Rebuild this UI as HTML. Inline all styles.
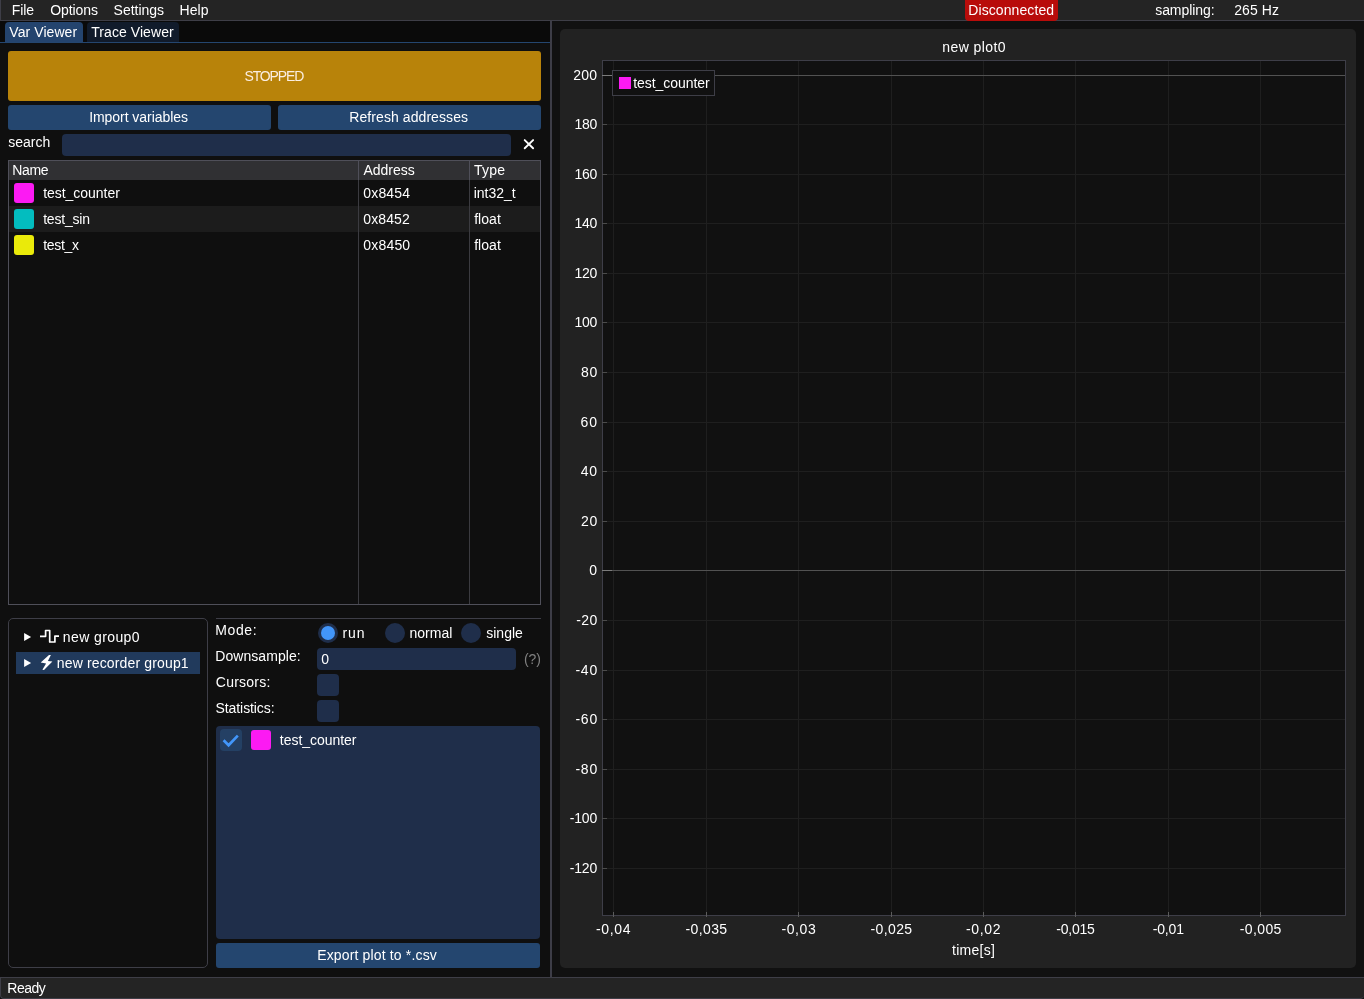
<!DOCTYPE html>
<html><head><meta charset="utf-8"><title>viewer</title>
<style>
html,body{margin:0;padding:0;}
body{width:1364px;height:999px;overflow:hidden;background:#111111;position:relative;font-family:"Liberation Sans",sans-serif;font-size:14px;color:#fff;}
.a{position:absolute;box-sizing:border-box;}
.t{position:absolute;white-space:pre;line-height:16px;height:16px;font-family:"Liberation Sans",sans-serif;font-size:14px;color:#fff;}
svg{position:absolute;left:0;top:0;overflow:visible;}
#tx{position:absolute;left:0;top:0;width:1364px;height:999px;will-change:transform;}
</style></head>
<body>
<div class="a" style="left:0px;top:0px;width:1364px;height:20px;background:#242424;"></div>
<div class="a" style="left:0px;top:20px;width:1364px;height:1px;background:#3e3e47;"></div>
<div class="a" style="left:0px;top:0px;width:1px;height:21px;background:#3e3e47;"></div>
<div class="a" style="left:0px;top:21px;width:550px;height:21px;background:#0a0a0a;"></div>
<div class="a" style="left:0px;top:42px;width:550px;height:1px;background:#24466f;"></div>
<div class="a" style="left:0px;top:43px;width:550px;height:934px;background:#0f0f0f;"></div>
<div class="a" style="left:550px;top:21px;width:2px;height:956px;background:#3d3d47;"></div>
<div class="a" style="left:0px;top:977px;width:552px;height:22px;background:#0f0f0f;"></div>
<div class="a" style="left:0px;top:977px;width:1364px;height:22px;background:#242424;border:1px solid #3e3e47;border-right:none;border-radius:0 0 4px 4px;"></div>
<div class="a" style="left:965px;top:0px;width:93px;height:21px;background:#b80c0a;border-radius:0 0 4px 4px;"></div>
<div class="a" style="left:5px;top:22px;width:78px;height:20px;background:#24446e;border-radius:4px 4px 0 0;"></div>
<div class="a" style="left:87px;top:22px;width:92px;height:20px;background:#111b2b;border-radius:4px 4px 0 0;"></div>
<div class="a" style="left:8px;top:51px;width:533px;height:50px;background:#b8830a;border-radius:3px;"></div>
<div class="a" style="left:8px;top:105px;width:263px;height:25px;background:#24466f;border-radius:3px;"></div>
<div class="a" style="left:278px;top:105px;width:263px;height:25px;background:#24466f;border-radius:3px;"></div>
<div class="a" style="left:62px;top:134px;width:449px;height:22px;background:#1f2e4a;border-radius:4px;"></div>
<div class="a" style="left:8px;top:160px;width:533px;height:445px;border:1px solid #4f4f59;"></div>
<div class="a" style="left:9px;top:161px;width:531px;height:19px;background:#303033;"></div>
<div class="a" style="left:9px;top:206px;width:531px;height:26px;background:#1c1c1c;"></div>
<div class="a" style="left:358px;top:161px;width:1px;height:443px;background:#3b3b40;"></div>
<div class="a" style="left:469px;top:161px;width:1px;height:443px;background:#3b3b40;"></div>
<div class="a" style="left:358px;top:161px;width:1px;height:19px;background:#4f4f59;"></div>
<div class="a" style="left:469px;top:161px;width:1px;height:19px;background:#4f4f59;"></div>
<div class="a" style="left:14px;top:183px;width:20px;height:20px;background:#fc1af3;border-radius:3px;"></div>
<div class="a" style="left:14px;top:209px;width:20px;height:20px;background:#03bdbf;border-radius:3px;"></div>
<div class="a" style="left:14px;top:235px;width:20px;height:20px;background:#eaea0a;border-radius:3px;"></div>
<div class="a" style="left:8px;top:618px;width:200px;height:350px;border:1px solid #3e3e47;border-radius:5px;"></div>
<div class="a" style="left:16px;top:652px;width:184px;height:22px;background:#213a5c;"></div>
<div class="a" style="left:216px;top:618px;width:325px;height:1px;background:#3e3e47;"></div>
<div class="a" style="left:318px;top:623px;width:20px;height:20px;background:#1f2e4a;border-radius:50%;"></div>
<div class="a" style="left:321px;top:626px;width:14px;height:14px;background:#4296fa;border-radius:50%;"></div>
<div class="a" style="left:385px;top:623px;width:20px;height:20px;background:#1f2e4a;border-radius:50%;"></div>
<div class="a" style="left:461px;top:623px;width:20px;height:20px;background:#1f2e4a;border-radius:50%;"></div>
<div class="a" style="left:317px;top:648px;width:199px;height:22px;background:#1f2e4a;border-radius:4px;"></div>
<div class="a" style="left:317px;top:674px;width:22px;height:22px;background:#1f2e4a;border-radius:4px;"></div>
<div class="a" style="left:317px;top:700px;width:22px;height:22px;background:#1f2e4a;border-radius:4px;"></div>
<div class="a" style="left:216px;top:726px;width:324px;height:213px;background:#1f2e4a;border-radius:4px;"></div>
<div class="a" style="left:220px;top:729px;width:22px;height:22px;background:#244064;border-radius:4px;"></div>
<div class="a" style="left:251px;top:730px;width:20px;height:20px;background:#fc1af3;border-radius:3px;"></div>
<div class="a" style="left:216px;top:943px;width:324px;height:25px;background:#24466f;border-radius:3px;"></div>
<div class="a" style="left:560px;top:29px;width:796px;height:939px;background:#222222;border-radius:5px;"></div>
<div class="a" style="left:602px;top:60px;width:744px;height:856px;background:#111111;"></div>
<svg width="1364" height="999" viewBox="0 0 1364 999"><rect x="613" y="61" width="1" height="854" fill="#1f1f1f"/><rect x="706" y="61" width="1" height="854" fill="#1f1f1f"/><rect x="798" y="61" width="1" height="854" fill="#1f1f1f"/><rect x="891" y="61" width="1" height="854" fill="#1f1f1f"/><rect x="983" y="61" width="1" height="854" fill="#1f1f1f"/><rect x="1075" y="61" width="1" height="854" fill="#1f1f1f"/><rect x="1168" y="61" width="1" height="854" fill="#1f1f1f"/><rect x="1260" y="61" width="1" height="854" fill="#1f1f1f"/><rect x="603" y="75" width="742" height="1" fill="#525252"/><rect x="603" y="124" width="742" height="1" fill="#1f1f1f"/><rect x="603" y="174" width="742" height="1" fill="#1f1f1f"/><rect x="603" y="223" width="742" height="1" fill="#1f1f1f"/><rect x="603" y="273" width="742" height="1" fill="#1f1f1f"/><rect x="603" y="322" width="742" height="1" fill="#1f1f1f"/><rect x="603" y="372" width="742" height="1" fill="#1f1f1f"/><rect x="603" y="422" width="742" height="1" fill="#1f1f1f"/><rect x="603" y="471" width="742" height="1" fill="#1f1f1f"/><rect x="603" y="521" width="742" height="1" fill="#1f1f1f"/><rect x="603" y="570" width="742" height="1" fill="#525252"/><rect x="603" y="620" width="742" height="1" fill="#1f1f1f"/><rect x="603" y="670" width="742" height="1" fill="#1f1f1f"/><rect x="603" y="719" width="742" height="1" fill="#1f1f1f"/><rect x="603" y="769" width="742" height="1" fill="#1f1f1f"/><rect x="603" y="818" width="742" height="1" fill="#1f1f1f"/><rect x="603" y="868" width="742" height="1" fill="#1f1f1f"/></svg>
<div class="a" style="left:602px;top:60px;width:744px;height:856px;border:1px solid #3e3e48;"></div>
<svg width="1364" height="999" viewBox="0 0 1364 999"><rect x="613" y="912" width="1" height="5" fill="#5c5c5c"/><rect x="706" y="912" width="1" height="5" fill="#5c5c5c"/><rect x="798" y="912" width="1" height="5" fill="#5c5c5c"/><rect x="891" y="912" width="1" height="5" fill="#5c5c5c"/><rect x="983" y="912" width="1" height="5" fill="#5c5c5c"/><rect x="1075" y="912" width="1" height="5" fill="#5c5c5c"/><rect x="1168" y="912" width="1" height="5" fill="#5c5c5c"/><rect x="1260" y="912" width="1" height="5" fill="#5c5c5c"/><rect x="602" y="75" width="10" height="1" fill="#7c7c7c"/><rect x="602" y="124" width="5" height="1" fill="#4c4c4c"/><rect x="602" y="174" width="5" height="1" fill="#4c4c4c"/><rect x="602" y="223" width="5" height="1" fill="#4c4c4c"/><rect x="602" y="273" width="5" height="1" fill="#4c4c4c"/><rect x="602" y="322" width="5" height="1" fill="#4c4c4c"/><rect x="602" y="372" width="5" height="1" fill="#4c4c4c"/><rect x="602" y="422" width="5" height="1" fill="#4c4c4c"/><rect x="602" y="471" width="5" height="1" fill="#4c4c4c"/><rect x="602" y="521" width="5" height="1" fill="#4c4c4c"/><rect x="602" y="570" width="10" height="1" fill="#7c7c7c"/><rect x="602" y="620" width="5" height="1" fill="#4c4c4c"/><rect x="602" y="670" width="5" height="1" fill="#4c4c4c"/><rect x="602" y="719" width="5" height="1" fill="#4c4c4c"/><rect x="602" y="769" width="5" height="1" fill="#4c4c4c"/><rect x="602" y="818" width="5" height="1" fill="#4c4c4c"/><rect x="602" y="868" width="5" height="1" fill="#4c4c4c"/></svg>
<div class="a" style="left:612px;top:70px;width:103px;height:26px;background:#111111;border:1px solid #3e3e47;"></div>
<div class="a" style="left:619px;top:77px;width:12px;height:12px;background:#fc1af3;"></div>
<svg width="1364" height="999" viewBox="0 0 1364 999"><path d="M24.1 632.9 L31.1 637 L24.1 641.1 Z" fill="#fff"/><path d="M24.1 658.9 L31.1 663 L24.1 667.1 Z" fill="#fff"/><path d="M40.0 636.3 H45.6 V630.5 H49.7 V642 H54.9 V636.1 H59.0" fill="none" stroke="#fff" stroke-width="1.7" stroke-linecap="butt" stroke-linejoin="round"/><path d="M49.0 654.9 L50.9 654.9 L47.9 660.9 L52.4 661.6 L44.0 670.0 L42.4 669.7 L46.1 663.6 L40.7 662.6 Z" fill="#fff"/><path d="M524.7 140.1 L533.1 148.3 M533.1 140.1 L524.7 148.3" stroke="#fff" stroke-width="1.9" stroke-linecap="round" fill="none"/><path d="M223.6 740.2 L228.6 745.2 L237.8 735.6" stroke="#4296fa" stroke-width="2.7" fill="none"/></svg>
<div id="tx">
<div class="t" style="left:11.68px;top:2.00px;letter-spacing:-0.030px;">File</div>
<div class="t" style="left:50.20px;top:2.00px;letter-spacing:-0.089px;">Options</div>
<div class="t" style="left:113.59px;top:2.00px;letter-spacing:-0.024px;">Settings</div>
<div class="t" style="left:179.40px;top:2.00px;letter-spacing:0.135px;">Help</div>
<div class="t" style="left:968.31px;top:2.00px;letter-spacing:0.087px;">Disconnected</div>
<div class="t" style="left:1155.20px;top:2.00px;letter-spacing:-0.053px;">sampling:</div>
<div class="t" style="left:1234.14px;top:2.00px;letter-spacing:0.114px;">265 Hz</div>
<div class="t" style="left:9.37px;top:24.00px;letter-spacing:0.065px;">Var Viewer</div>
<div class="t" style="left:91.25px;top:24.00px;letter-spacing:0.063px;">Trace Viewer</div>
<div class="t" style="left:244.44px;top:68.00px;letter-spacing:-1.118px;color:#fbeee2;">STOPPED</div>
<div class="t" style="left:89.13px;top:109.00px;letter-spacing:-0.047px;">Import variables</div>
<div class="t" style="left:349.28px;top:109.00px;letter-spacing:0.077px;">Refresh addresses</div>
<div class="t" style="left:8.20px;top:134.00px;">search</div>
<div class="t" style="left:12.31px;top:162.00px;letter-spacing:-0.343px;">Name</div>
<div class="t" style="left:363.40px;top:162.00px;">Address</div>
<div class="t" style="left:473.96px;top:162.00px;letter-spacing:0.240px;">Type</div>
<div class="t" style="left:43.18px;top:185.00px;letter-spacing:-0.036px;">test_counter</div>
<div class="t" style="left:43.18px;top:211.00px;letter-spacing:-0.193px;">test_sin</div>
<div class="t" style="left:43.18px;top:237.00px;letter-spacing:-0.306px;">test_x</div>
<div class="t" style="left:363.27px;top:185.00px;letter-spacing:0.169px;">0x8454</div>
<div class="t" style="left:363.27px;top:211.00px;letter-spacing:0.119px;">0x8452</div>
<div class="t" style="left:363.27px;top:237.00px;letter-spacing:0.188px;">0x8450</div>
<div class="t" style="left:473.70px;top:185.00px;">int32_t</div>
<div class="t" style="left:474.21px;top:211.00px;letter-spacing:0.025px;">float</div>
<div class="t" style="left:474.21px;top:237.00px;letter-spacing:0.025px;">float</div>
<div class="t" style="left:62.81px;top:629.00px;letter-spacing:0.399px;">new group0</div>
<div class="t" style="left:56.81px;top:655.00px;letter-spacing:0.148px;">new recorder group1</div>
<div class="t" style="left:215.31px;top:622.00px;letter-spacing:0.585px;">Mode:</div>
<div class="t" style="left:215.31px;top:648.00px;letter-spacing:0.057px;">Downsample:</div>
<div class="t" style="left:215.84px;top:674.00px;letter-spacing:0.240px;">Cursors:</div>
<div class="t" style="left:215.59px;top:700.00px;letter-spacing:-0.093px;">Statistics:</div>
<div class="t" style="left:342.56px;top:624.50px;letter-spacing:0.822px;">run</div>
<div class="t" style="left:409.57px;top:624.50px;letter-spacing:-0.019px;">normal</div>
<div class="t" style="left:486.15px;top:624.50px;letter-spacing:0.034px;">single</div>
<div class="t" style="left:321.27px;top:651.00px;">0</div>
<div class="t" style="left:524.11px;top:651.00px;letter-spacing:-0.207px;color:#808080;">(?)</div>
<div class="t" style="left:279.87px;top:732.00px;letter-spacing:-0.042px;">test_counter</div>
<div class="t" style="left:317.15px;top:947.00px;letter-spacing:0.156px;">Export plot to *.csv</div>
<div class="t" style="left:7.27px;top:980.00px;letter-spacing:-0.483px;">Ready</div>
<div class="t" style="left:942.28px;top:39.00px;letter-spacing:0.419px;">new plot0</div>
<div class="t" style="left:952.05px;top:942.00px;letter-spacing:0.265px;">time[s]</div>
<div class="t" style="left:633.23px;top:75.00px;letter-spacing:-0.059px;">test_counter</div>
<div class="t" style="left:573.20px;top:66.70px;letter-spacing:0.305px;">200</div>
<div class="t" style="left:574.61px;top:115.70px;letter-spacing:-0.397px;">180</div>
<div class="t" style="left:574.61px;top:165.70px;letter-spacing:-0.397px;">160</div>
<div class="t" style="left:574.61px;top:214.70px;letter-spacing:-0.397px;">140</div>
<div class="t" style="left:574.61px;top:264.70px;letter-spacing:-0.397px;">120</div>
<div class="t" style="left:574.61px;top:313.70px;letter-spacing:-0.397px;">100</div>
<div class="t" style="left:580.88px;top:363.70px;letter-spacing:0.717px;">80</div>
<div class="t" style="left:580.56px;top:413.70px;letter-spacing:1.035px;">60</div>
<div class="t" style="left:580.67px;top:462.70px;letter-spacing:0.931px;">40</div>
<div class="t" style="left:580.99px;top:512.70px;letter-spacing:0.612px;">20</div>
<div class="t" style="left:589.27px;top:561.70px;">0</div>
<div class="t" style="left:576.19px;top:611.70px;letter-spacing:0.373px;">-20</div>
<div class="t" style="left:575.44px;top:661.70px;letter-spacing:0.748px;">-40</div>
<div class="t" style="left:575.44px;top:710.70px;letter-spacing:0.748px;">-60</div>
<div class="t" style="left:575.44px;top:760.70px;letter-spacing:0.748px;">-80</div>
<div class="t" style="left:569.76px;top:809.70px;letter-spacing:-0.203px;">-100</div>
<div class="t" style="left:569.76px;top:859.70px;letter-spacing:-0.203px;">-120</div>
<div class="t" style="left:596.03px;top:921.00px;letter-spacing:0.660px;">-0,04</div>
<div class="t" style="left:685.55px;top:921.00px;letter-spacing:0.374px;">-0,035</div>
<div class="t" style="left:781.44px;top:921.00px;letter-spacing:0.582px;">-0,03</div>
<div class="t" style="left:870.55px;top:921.00px;letter-spacing:0.374px;">-0,025</div>
<div class="t" style="left:966.05px;top:921.00px;letter-spacing:0.646px;">-0,02</div>
<div class="t" style="left:1056.21px;top:921.00px;letter-spacing:-0.211px;">-0,015</div>
<div class="t" style="left:1152.73px;top:921.00px;letter-spacing:-0.174px;">-0,01</div>
<div class="t" style="left:1239.70px;top:921.00px;letter-spacing:0.403px;">-0,005</div>
</div>
</body></html>
